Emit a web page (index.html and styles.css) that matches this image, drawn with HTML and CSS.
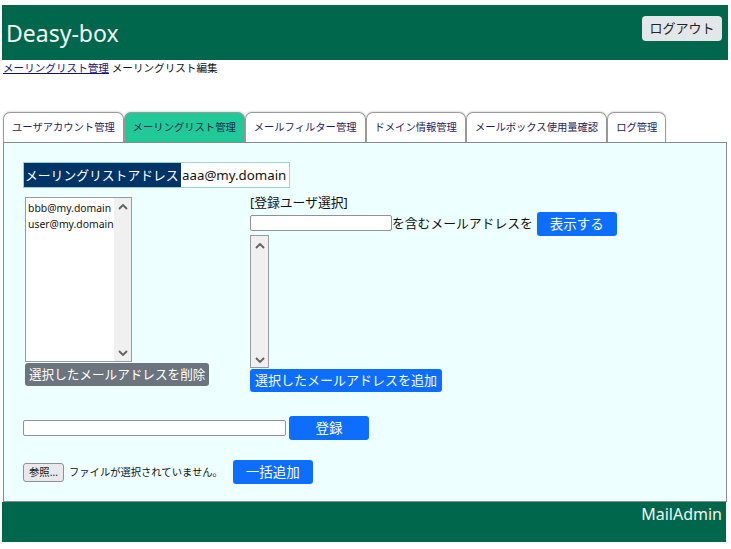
FILE: index.html
```html
<!DOCTYPE html>
<html lang="ja">
<head>
<meta charset="utf-8">
<title>Deasy-box</title>
<link rel="stylesheet" href="styles.css">
</head>
<body>
<header class="topbar">
  <h1 class="brand">Deasy-box</h1>
  <button class="logout" type="button">ログアウト</button>
</header>
<nav class="crumbs"><a href="#" class="crumb-link">メーリングリスト管理</a> メーリングリスト編集</nav>

<ul class="tabs">
  <li class="tab">ユーザアカウント管理</li>
  <li class="tab active">メーリングリスト管理</li>
  <li class="tab">メールフィルター管理</li>
  <li class="tab">ドメイン情報管理</li>
  <li class="tab">メールボックス使用量確認</li>
  <li class="tab">ログ管理</li>
</ul>

<section class="panel">
  <div class="addr">
    <span class="addr-label">メーリングリストアドレス</span>
    <input class="addr-input" type="text" value="aaa@my.domain">
  </div>

  <div class="cols">
    <div class="col-left">
      <div class="listbox members">
        <div class="list-items">
          <div class="list-item">bbb@my.domain</div>
          <div class="list-item">user@my.domain</div>
        </div>
        <div class="vscroll">
          <svg class="chev" viewBox="0 0 10 6" width="10" height="6"><polyline points="1,5 5,1 9,5" fill="none" stroke="#606060" stroke-width="1.8"/></svg>
          <svg class="chev" viewBox="0 0 10 6" width="10" height="6"><polyline points="1,1 5,5 9,1" fill="none" stroke="#606060" stroke-width="1.8"/></svg>
        </div>
      </div>
      <button class="btn btn-gray" type="button">選択したメールアドレスを削除</button>
    </div>

    <div class="col-right">
      <div class="sub-title">[登録ユーザ選択]</div>
      <div class="search">
        <input class="text-input search-input" type="text">
        <span class="search-text">を含むメールアドレスを</span>
        <button class="btn btn-blue btn-fixed" type="button">表示する</button>
      </div>
      <div class="listbox users">
        <div class="vscroll">
          <svg class="chev" viewBox="0 0 10 6" width="10" height="6"><polyline points="1,5 5,1 9,5" fill="none" stroke="#606060" stroke-width="1.8"/></svg>
          <svg class="chev" viewBox="0 0 10 6" width="10" height="6"><polyline points="1,1 5,5 9,1" fill="none" stroke="#606060" stroke-width="1.8"/></svg>
        </div>
      </div>
      <button class="btn btn-blue" type="button">選択したメールアドレスを追加</button>
    </div>
  </div>

  <div class="reg-row">
    <input class="text-input reg-input" type="text">
    <button class="btn btn-blue btn-fixed" type="button">登録</button>
  </div>

  <div class="file-row">
    <button class="file-btn" type="button">参照...</button>
    <span class="file-text">ファイルが選択されていません。</span>
    <button class="btn btn-blue btn-fixed" type="button">一括追加</button>
  </div>
</section>

<footer class="footer">MailAdmin</footer>
</body>
</html>
```

FILE: styles.css
```css
* { box-sizing: border-box; }

body {
  margin: 0;
  padding: 5px 3px 0 2px;
  font-family: "Noto Sans", "Noto Sans CJK JP", sans-serif;
  color: #111;
  background: #fff;
}

.topbar {
  height: 55px;
  background: #00664c;
  display: flex;
  align-items: center;
  justify-content: space-between;
  padding: 0 6px 0 4px;
}

.brand {
  margin: 0;
  font-weight: normal;
  font-size: 23px;
  line-height: 30px;
  color: #f2f7f5;
}

.logout {
  width: 80px;
  height: 25px;
  margin-top: -8px;
  border: none;
  border-radius: 4px;
  background: #e4e7ea;
  color: #222;
  font-family: inherit;
  font-size: 13px;
  line-height: 25px;
  padding: 0;
}

.crumbs {
  font-size: 10.6px;
  line-height: 17px;
  padding-left: 1px;
  color: #111;
}

.crumb-link {
  color: #14146e;
  text-decoration: underline;
}

.tabs {
  list-style: none;
  margin: 35px 0 0 1px;
  padding: 0;
  display: flex;
  height: 30px;
}

.tab {
  height: 30px;
  padding: 0 8px;
  border: 1px solid #9a9a9a;
  border-bottom: none;
  border-radius: 7px 7px 0 0;
  background: #fff;
  box-shadow: 0 -1px 2px rgba(0,0,0,0.12);
  font-size: 10.3px;
  line-height: 29px;
  color: #1c1c5c;
  white-space: nowrap;
}

.tab.active {
  background: #20c997;
  color: #1a2a4a;
}

.panel {
  margin: 0 1px 0 1px;
  height: 360px;
  border: 1px solid #8a8a8a;
  background: #eeffff;
  padding: 19px 0 0 19px;
}

.addr {
  display: inline-flex;
  border: 1px solid #9fcfd6;
  height: 26px;
}

.addr-label {
  background: #003366;
  color: #fff;
  font-size: 12.8px;
  line-height: 24px;
  padding: 0 1px;
  width: 157px;
  white-space: nowrap;
}

.addr-input {
  width: 108px;
  height: 24px;
  border: none;
  padding: 0 0 0 1px;
  font-family: inherit;
  font-size: 13.3px;
  color: #111;
  background: #fff;
}

.cols {
  display: flex;
  margin-top: 5px;
}

.col-left {
  width: 227px;
  padding: 4px 0 0 2px;
  display: flex;
  flex-direction: column;
  align-items: flex-start;
}

.col-right {
  display: flex;
  flex-direction: column;
  align-items: flex-start;
}

.listbox {
  display: flex;
  border: 1px solid #9a9a9a;
  background: #fff;
}

.members {
  width: 107px;
  height: 165px;
}

.users {
  width: 19px;
  height: 133px;
}

.list-items {
  flex: 1;
  padding: 2px 0 0 2px;
}

.list-item {
  font-size: 10.4px;
  line-height: 16px;
  color: #111;
  white-space: nowrap;
}

.vscroll {
  width: 17px;
  background: #f0f0f0;
  display: flex;
  flex-direction: column;
  justify-content: space-between;
  align-items: center;
  padding: 6px 0 5px;
}

.users .vscroll { padding: 7px 0 4px; }

.chev { display: block; }

.btn {
  border: none;
  border-radius: 3px;
  color: #fff;
  font-family: inherit;
  font-size: 13px;
  line-height: 23px;
  height: 23px;
  padding: 0 5px;
  white-space: nowrap;
}

.btn-gray {
  background: #6c757d;
  padding: 0 4px;
  font-size: 12.6px;
}
.btn-blue { background: #0d6efd; }

.btn-fixed {
  width: 80px;
  height: 24px;
  line-height: 24px;
  font-size: 13.5px;
}

.col-left .btn { margin-top: 1px; }
.col-right .btn-blue:last-child { margin-top: 1px; }

.sub-title {
  font-size: 12.8px;
  line-height: 18px;
}

.search {
  display: flex;
  align-items: center;
  height: 24px;
}

.text-input {
  height: 16px;
  border: 1px solid #8f8f9d;
  border-radius: 2px;
  background: #fff;
  padding: 0 2px;
  font-family: inherit;
  font-size: 11px;
}

.search-input { width: 142px; }

.search-text {
  font-size: 12.8px;
  line-height: 18px;
  margin-right: 4px;
}

.reg-row {
  display: flex;
  align-items: center;
  height: 24px;
  margin-top: 24px;
}

.reg-input {
  width: 263px;
  margin-right: 3px;
}

.file-row {
  display: flex;
  align-items: center;
  height: 24px;
  margin-top: 20px;
}

.file-btn {
  width: 41px;
  height: 19px;
  padding: 0;
  border: 1px solid #8f8f9d;
  border-radius: 3px;
  background: #e9e9ed;
  font-family: inherit;
  font-size: 10.3px;
  line-height: 17px;
  color: #111;
}

.file-text {
  font-size: 10.3px;
  line-height: 16px;
  margin: 0 10px 0 5px;
}

.footer {
  margin-right: 2px;
  height: 40px;
  background: #00664c;
  color: #eef8f4;
  font-size: 16px;
  line-height: 22px;
  text-align: right;
  padding: 1px 4px 0 0;
}
```
